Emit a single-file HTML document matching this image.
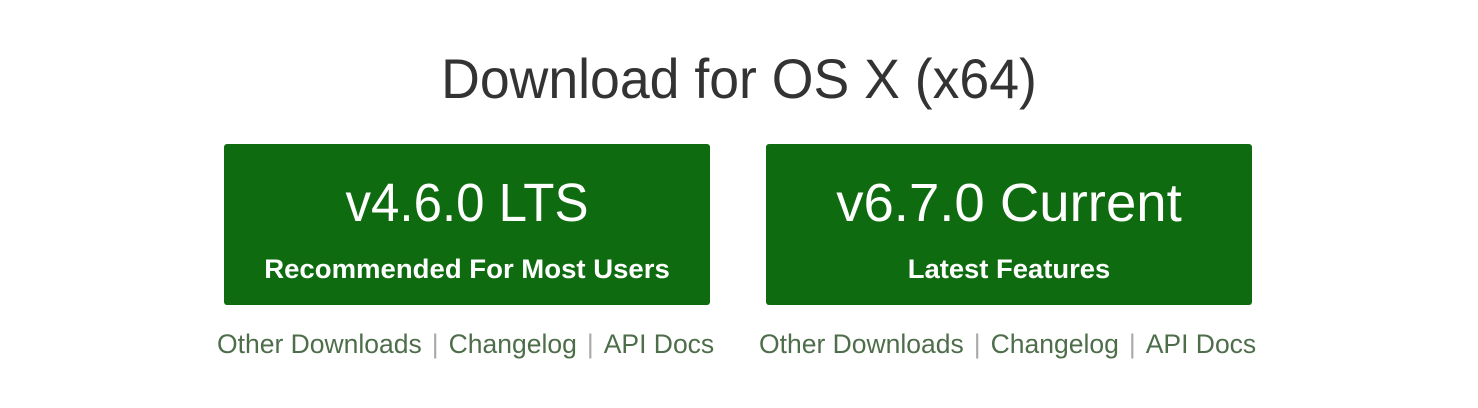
<!DOCTYPE html>
<html><head><style>
body{margin:0;width:1478px;height:408px;background:#fff;font-family:"Liberation Sans",sans-serif;position:relative;overflow:hidden}
.t{position:absolute;white-space:nowrap;transform-origin:center;text-align:center}
.btn{position:absolute;top:144px;width:486px;height:161px;background:#0f6b10;border-radius:3px}
.lk{position:absolute;top:329px;font-size:26.5px;color:#4e6e4b;white-space:nowrap}
.sep{color:#aaa;margin:0 10px}
</style></head><body>
<div class="t" style="left:0;width:1478px;top:46px;font-size:56px;color:#333;transform:scaleX(.957)">Download for OS X (x64)</div>
<div class="btn" style="left:224px"></div>
<div class="btn" style="left:766px"></div>
<div class="t" style="left:224px;width:486px;top:172px;font-size:54px;color:#fff;transform:scaleX(.945)">v4.6.0 LTS</div>
<div class="t" style="left:224px;width:486px;top:254px;font-size:27px;font-weight:bold;color:#fff;transform:scaleX(1.02)">Recommended For Most Users</div>
<div class="t" style="left:766px;width:486px;top:172px;font-size:54px;color:#fff;transform:scaleX(1.01)">v6.7.0 Current</div>
<div class="t" style="left:766px;width:486px;top:254px;font-size:27px;font-weight:bold;color:#fff;transform:scaleX(1.015)">Latest Features</div>
<div class="lk" style="left:217px">Other Downloads<span class="sep">|</span>Changelog<span class="sep">|</span>API Docs</div>
<div class="lk" style="left:759px">Other Downloads<span class="sep">|</span>Changelog<span class="sep">|</span>API Docs</div>
</body></html>
